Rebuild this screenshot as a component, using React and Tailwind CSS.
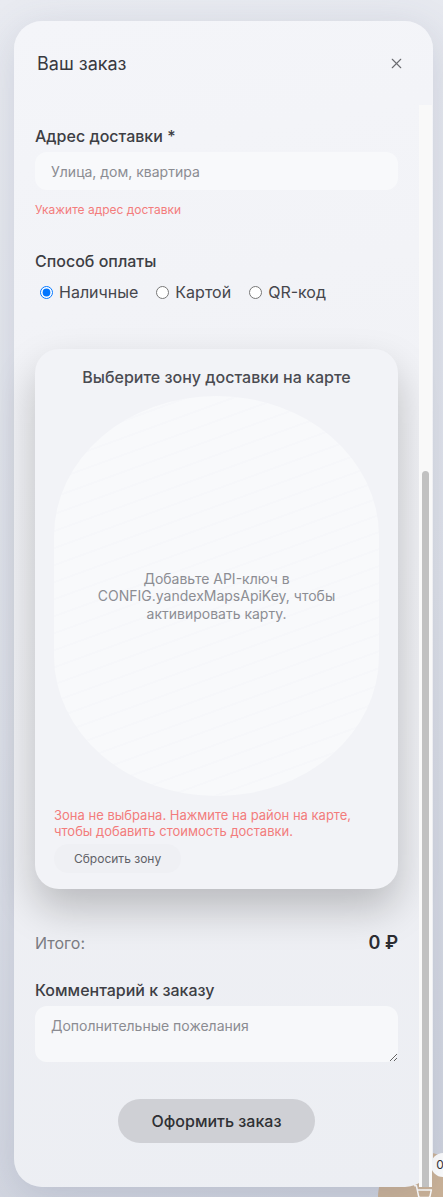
// Оформление заказа: модальное окно с адресом, оплатой, зоной доставки и комментарием.
import { X, ShoppingCart } from "lucide-react";

export default function App() {
  return (
    <div
      className="relative min-h-[1197px] overflow-hidden bg-[linear-gradient(160deg,#e9ebf1_0%,#dfe2ea_55%,#cfd3de_100%)] pl-[14px] pt-[21px]"
      style={{ fontFamily: "Inter, 'Noto Sans', sans-serif" }}
    >
      {/* Плавающая кнопка корзины под затемнением */}
      <div className="absolute left-[378px] top-[1152px] flex h-[90px] w-[90px] items-start justify-center rounded-full bg-[#cbb297] pt-[32px]">
        <ShoppingCart className="h-5 w-5 text-white" strokeWidth={1.8} />
      </div>
      <div className="absolute left-[431px] top-[1153px] flex h-[24px] w-[24px] items-center justify-center rounded-full bg-white text-[12px] text-[#333]">
        <span className="-ml-[6px]">0</span>
      </div>

      {/* Модальное окно */}
      <div className="relative flex h-[1166px] w-[419px] flex-col rounded-[28px] bg-[linear-gradient(170deg,#f4f5f9_0%,#eff0f4_60%,#eceef3_100%)] shadow-[0_10px_40px_rgba(80,90,120,0.18)]">
        {/* Шапка */}
        <div className="flex h-[84px] items-center justify-between pl-[23px] pr-[28px]">
          <h2 className="text-[18px] font-normal text-[#38393f]">Ваш заказ</h2>
          <X className="h-[17px] w-[17px] text-[#6a6b70]" strokeWidth={1.6} />
        </div>

        <div className="flex min-h-0 flex-1">
          {/* Содержимое */}
          <div className="flex flex-1 flex-col px-[21px] pt-[19px]">
            <label className="text-[16px] font-medium leading-[24px] text-[#3d3e44]">
              Адрес доставки *
            </label>
            <div className="mt-[4px] flex h-[38px] items-center rounded-[12px] bg-[#f8f9fb] px-[16px] text-[14px] text-[#8b8c92]">
              Улица, дом, квартира
            </div>
            <p className="mt-[12px] text-[12px] leading-[16px] text-[#f37c7c]">
              Укажите адрес доставки
            </p>

            <p className="mt-[31px] text-[16px] font-medium leading-[24px] text-[#3d3e44]">
              Способ оплаты
            </p>
            <div className="mt-[7px] flex h-[24px] items-center text-[16px] text-[#45464c]">
              <label className="flex items-center gap-[6px]">
                <input type="radio" name="pay" defaultChecked className="m-0 ml-[5px] h-[13px] w-[13px]" />
                Наличные
              </label>
              <label className="ml-[18px] flex items-center gap-[6px]">
                <input type="radio" name="pay" className="m-0 h-[13px] w-[13px]" />
                Картой
              </label>
              <label className="ml-[18px] flex items-center gap-[6px]">
                <input type="radio" name="pay" className="m-0 h-[13px] w-[13px]" />
                QR-код
              </label>
            </div>

            {/* Карта зон доставки */}
            <div className="mt-[45px] flex flex-col rounded-[24px] bg-[#f2f3f7] px-[19px] pb-[16px] pt-[16px] shadow-[0_20px_40px_rgba(0,0,0,0.22)]">
              <p className="text-center text-[16px] font-medium leading-[24px] text-[#4a4b51]">
                Выберите зону доставки на карте
              </p>
              <div className="mt-[7px] flex h-[400px] items-center justify-center rounded-[162px/140px] bg-[repeating-linear-gradient(160deg,#f8f9fb_0px,#f8f9fb_14px,#f6f7fa_14px,#f6f7fa_16px)] px-[30px]">
                <p className="text-center text-[14px] leading-[17.5px] text-[#8c8d93]">
                  Добавьте API-ключ в
                  <br />
                  CONFIG.yandexMapsApiKey, чтобы
                  <br />
                  активировать карту.
                </p>
              </div>
              <p className="mt-[11px] text-[13px] leading-[16px] text-[#f37c7c]">
                Зона не выбрана. Нажмите на район на карте,
                <br />
                чтобы добавить стоимость доставки.
              </p>
              <div className="mt-[5px] flex">
                <button className="h-[29px] rounded-full bg-[#eff0f4] px-[20px] text-[12px] text-[#606167]">
                  Сбросить зону
                </button>
              </div>
            </div>

            {/* Итог */}
            <div className="mt-[42px] flex items-center justify-between leading-[24px]">
              <span className="text-[16px] text-[#7a7b81]">Итого:</span>
              <span className="text-[18px] font-semibold text-[#2b2c31]">0 ₽</span>
            </div>

            <p className="mt-[23px] text-[16px] font-medium leading-[24px] text-[#3d3e44]">
              Комментарий к заказу
            </p>
            <textarea
              placeholder="Дополнительные пожелания"
              className="mt-[4px] h-[56px] resize-y rounded-[12px] bg-[#f7f8fa] px-[16px] py-[9px] text-[14px] text-[#45464c] outline-none placeholder:text-[#8b8c92]"
            />

            <div className="mt-[37px] flex justify-center">
              <button className="h-[44px] w-[197px] rounded-full bg-[#cfd0d5] text-[16px] font-medium text-[#2f3034]">
                Оформить заказ
              </button>
            </div>
          </div>

          {/* Полоса прокрутки */}
          <div className="mr-[1px] w-[13px] bg-[#f9f9f9] px-[3px] pt-[366px]">
            <div className="h-full rounded-t-[4px] bg-[#c1c1c1]" />
          </div>
        </div>
      </div>
    </div>
  );
}
